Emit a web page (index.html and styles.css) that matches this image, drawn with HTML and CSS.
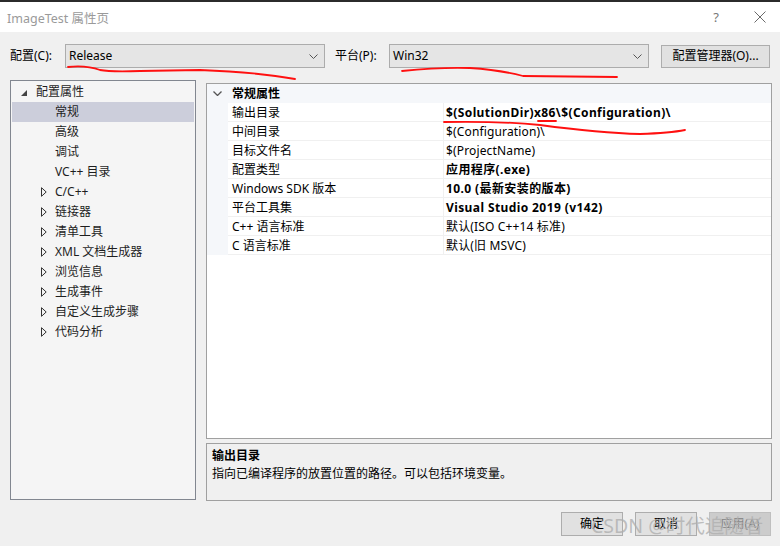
FILE: index.html
```html
<!DOCTYPE html>
<html>
<head>
<meta charset="utf-8">
<title>ImageTest 属性页</title>
<link rel="stylesheet" href="styles.css">
</head>
<body>
<div class="window">
  <header class="titlebar">
    <span class="title">ImageTest 属性页</span>
    <div class="title-controls">
      <span class="help">?</span>
      <svg class="close" width="12" height="12" viewBox="0 0 12 12"><path d="M0.5 0.5L11.5 11.5M11.5 0.5L0.5 11.5" stroke="#6a6a6a" stroke-width="1" fill="none"/></svg>
    </div>
  </header>

  <div class="toolbar">
    <span class="lbl lbl-config">配置(C):</span>
    <div class="select">
      <span class="select-text">Release</span>
      <svg class="chev" width="9" height="5" viewBox="0 0 9 5"><path d="M0.5 0.5L4.5 4.5L8.5 0.5" stroke="#555" fill="none"/></svg>
    </div>
    <span class="lbl lbl-platform">平台(P):</span>
    <div class="select">
      <span class="select-text">Win32</span>
      <svg class="chev" width="9" height="5" viewBox="0 0 9 5"><path d="M0.5 0.5L4.5 4.5L8.5 0.5" stroke="#555" fill="none"/></svg>
    </div>
    <button class="btn btn-mgr">配置管理器(O)...</button>
  </div>

  <div class="main">
    <nav class="tree">
      <div class="tree-row l0"><span class="twisty"><svg class="tri-open" width="6" height="6" viewBox="0 0 6 6"><path d="M6 0L6 6L0 6Z" fill="#444"/></svg></span><span>配置属性</span></div>
      <div class="tree-row l1 selected"><span class="twisty"></span><span>常规</span></div>
      <div class="tree-row l1"><span class="twisty"></span><span>高级</span></div>
      <div class="tree-row l1"><span class="twisty"></span><span>调试</span></div>
      <div class="tree-row l1"><span class="twisty"></span><span>VC++ 目录</span></div>
      <div class="tree-row l1"><span class="twisty"><svg class="tri-closed" width="6" height="10" viewBox="0 0 6 10"><path d="M0.5 0.7L5.2 5L0.5 9.3Z" fill="none" stroke="#333" stroke-width="1"/></svg></span><span>C/C++</span></div>
      <div class="tree-row l1"><span class="twisty"><svg class="tri-closed" width="6" height="10" viewBox="0 0 6 10"><path d="M0.5 0.7L5.2 5L0.5 9.3Z" fill="none" stroke="#333" stroke-width="1"/></svg></span><span>链接器</span></div>
      <div class="tree-row l1"><span class="twisty"><svg class="tri-closed" width="6" height="10" viewBox="0 0 6 10"><path d="M0.5 0.7L5.2 5L0.5 9.3Z" fill="none" stroke="#333" stroke-width="1"/></svg></span><span>清单工具</span></div>
      <div class="tree-row l1"><span class="twisty"><svg class="tri-closed" width="6" height="10" viewBox="0 0 6 10"><path d="M0.5 0.7L5.2 5L0.5 9.3Z" fill="none" stroke="#333" stroke-width="1"/></svg></span><span>XML 文档生成器</span></div>
      <div class="tree-row l1"><span class="twisty"><svg class="tri-closed" width="6" height="10" viewBox="0 0 6 10"><path d="M0.5 0.7L5.2 5L0.5 9.3Z" fill="none" stroke="#333" stroke-width="1"/></svg></span><span>浏览信息</span></div>
      <div class="tree-row l1"><span class="twisty"><svg class="tri-closed" width="6" height="10" viewBox="0 0 6 10"><path d="M0.5 0.7L5.2 5L0.5 9.3Z" fill="none" stroke="#333" stroke-width="1"/></svg></span><span>生成事件</span></div>
      <div class="tree-row l1"><span class="twisty"><svg class="tri-closed" width="6" height="10" viewBox="0 0 6 10"><path d="M0.5 0.7L5.2 5L0.5 9.3Z" fill="none" stroke="#333" stroke-width="1"/></svg></span><span>自定义生成步骤</span></div>
      <div class="tree-row l1"><span class="twisty"><svg class="tri-closed" width="6" height="10" viewBox="0 0 6 10"><path d="M0.5 0.7L5.2 5L0.5 9.3Z" fill="none" stroke="#333" stroke-width="1"/></svg></span><span>代码分析</span></div>
    </nav>

    <div class="right">
      <div class="grid">
        <div class="ghead">
          <span class="strip"><svg width="9" height="5" viewBox="0 0 9 5"><path d="M0.5 0.5L4.5 4.5L8.5 0.5" stroke="#555" stroke-width="1.3" fill="none"/></svg></span>
          <span class="ghead-text">常规属性</span>
        </div>
        <div class="grow"><span class="strip"></span><span class="gname">输出目录</span><span class="gval bold">$(SolutionDir)x86\$(Configuration)\</span></div>
        <div class="grow"><span class="strip"></span><span class="gname">中间目录</span><span class="gval">$(Configuration)\</span></div>
        <div class="grow"><span class="strip"></span><span class="gname">目标文件名</span><span class="gval">$(ProjectName)</span></div>
        <div class="grow"><span class="strip"></span><span class="gname">配置类型</span><span class="gval bold">应用程序(.exe)</span></div>
        <div class="grow"><span class="strip"></span><span class="gname">Windows SDK 版本</span><span class="gval bold">10.0 (最新安装的版本)</span></div>
        <div class="grow"><span class="strip"></span><span class="gname">平台工具集</span><span class="gval bold">Visual Studio 2019 (v142)</span></div>
        <div class="grow"><span class="strip"></span><span class="gname">C++ 语言标准</span><span class="gval">默认(ISO C++14 标准)</span></div>
        <div class="grow"><span class="strip"></span><span class="gname">C 语言标准</span><span class="gval">默认(旧 MSVC)</span></div>
      </div>
      <div class="desc">
        <div class="desc-title">输出目录</div>
        <div class="desc-text">指向已编译程序的放置位置的路径。可以包括环境变量。</div>
      </div>
    </div>
  </div>

  <footer class="footer">
    <button class="btn btn-foot">确定</button>
    <button class="btn btn-foot">取消</button>
    <button class="btn btn-foot btn-disabled">应用(A)</button>
  </footer>

  <div class="watermark">CSDN @时代追随者</div>

  <svg class="annot" width="780" height="546" viewBox="0 0 780 546">
    <g stroke="#ff1010" stroke-width="1.8" fill="none" stroke-linecap="round">
      <path d="M68 67 Q 86 65 100 70 Q 110 72 140 71 L 200 70 Q 255 72 295 79"/>
      <path d="M402 71 Q 440 67 470 68 Q 500 70 523 76 L 617 77"/>
      <path d="M444 122 Q 500 121 540 125 Q 600 133 640 134 Q 670 133 685 130"/>
      <path d="M538 121 L 556 121"/>
    </g>
  </svg>
</div>
</body>
</html>
```

FILE: styles.css
```css
* {
  box-sizing: border-box;
  margin: 0;
  padding: 0;
}

html, body {
  width: 780px;
  height: 546px;
  overflow: hidden;
}

body {
  background: #f0f0f0;
  font-family: "Noto Sans", "Noto Sans CJK SC", sans-serif;
  font-size: 12px;
  color: #000;
}

.window {
  position: relative;
  width: 780px;
  height: 546px;
}

/* title bar */
.titlebar {
  height: 32px;
  background: #fff;
  border-top: 2px solid #2b2b2b;
  display: flex;
  align-items: center;
  justify-content: space-between;
  padding-left: 7px;
}

.title {
  font-size: 12.5px;
  color: #9a9a9a;
}

.title-controls {
  display: flex;
  align-items: center;
}

.help {
  font-size: 13px;
  color: #777;
  margin-right: 35px;
}

.close {
  display: block;
  margin-right: 14px;
}

/* toolbar */
.toolbar {
  display: flex;
  align-items: center;
  height: 24px;
  margin-top: 12px;
  padding-left: 10px;
}

.lbl {
  display: block;
  line-height: 16px;
}

.lbl-config {
  width: 55px;
}

.lbl-platform {
  width: 54px;
  margin-left: 10px;
}

.select {
  width: 260px;
  height: 24px;
  background: #e5e5e5;
  border: 1px solid #acacac;
  display: flex;
  align-items: center;
  justify-content: space-between;
  padding-left: 3px;
  padding-right: 6px;
}

.select-text {
  font-size: 12px;
  line-height: 16px;
}

.chev {
  display: block;
}

.btn {
  font-family: "Noto Sans", "Noto Sans CJK SC", sans-serif;
  font-size: 12px;
  color: #000;
  background: #e1e1e1;
  border: 1px solid #adadad;
  line-height: 16px;
}

.btn-mgr {
  width: 109px;
  height: 23px;
  margin-left: 12px;
}

/* main area */
.main {
  display: flex;
  margin-top: 12px;
  padding-left: 10px;
}

.tree {
  width: 186px;
  height: 420px;
  background: #f5f5f5;
  border: 1px solid #828790;
  padding: 1px;
  color: #1e1e1e;
}

.tree-row {
  height: 20px;
  display: flex;
  align-items: center;
  line-height: 16px;
}

.tree-row.l0 {
  padding-left: 8px;
}

.tree-row.l1 {
  padding-left: 27px;
}

.tree-row.selected {
  background: #cccedb;
}

.twisty {
  width: 16px;
  height: 20px;
  display: flex;
  align-items: center;
}

.tri-open {
  margin-left: 1px;
  margin-top: 1px;
}

.tri-closed {
  margin-left: 2px;
}

.right {
  display: flex;
  flex-direction: column;
  gap: 4px;
  margin-top: 3px;
  margin-left: 10px;
  width: 566px;
}

.grid {
  height: 356px;
  background: #fff;
  border: 1px solid #a0a0a0;
}

.ghead {
  display: flex;
  height: 19px;
  background: #f5f7fa;
  align-items: center;
}

.ghead .strip {
  display: flex;
  align-items: center;
  justify-content: center;
  height: 19px;
}

.ghead-text {
  font-weight: bold;
  padding-left: 4px;
  line-height: 16px;
}

.grow {
  display: flex;
  height: 19px;
}

.strip {
  width: 21px;
  background: #f5f7fa;
  flex: none;
}

.gname {
  width: 216px;
  flex: none;
  padding-left: 4px;
  border-right: 1px solid #f0f0f0;
  border-bottom: 1px solid #f0f0f0;
  line-height: 19px;
  white-space: nowrap;
}

.gval {
  flex: 1;
  padding-left: 2px;
  border-bottom: 1px solid #f0f0f0;
  line-height: 19px;
  white-space: nowrap;
  letter-spacing: 0.15px;
}

.gval.bold {
  font-weight: bold;
  letter-spacing: 0.4px;
}

.desc {
  height: 58px;
  background: #f0f0f0;
  border: 1px solid #a0a0a0;
  padding: 3px 5px;
  line-height: 18px;
}

.desc-title {
  font-weight: bold;
}

/* footer */
.footer {
  display: flex;
  justify-content: flex-end;
  gap: 12px;
  padding-right: 9px;
  margin-top: 11px;
}

.btn-foot {
  width: 62px;
  height: 24px;
}

.btn-disabled {
  background: #cccccc;
  border-color: #bfbfbf;
  color: #838383;
}

/* overlays */
.watermark {
  position: absolute;
  left: 591px;
  top: 513px;
  font-size: 19.5px;
  line-height: 26px;
  color: rgba(175, 175, 175, 0.8);
  white-space: nowrap;
  pointer-events: none;
}

.annot {
  position: absolute;
  left: 0;
  top: 0;
  pointer-events: none;
}
```
